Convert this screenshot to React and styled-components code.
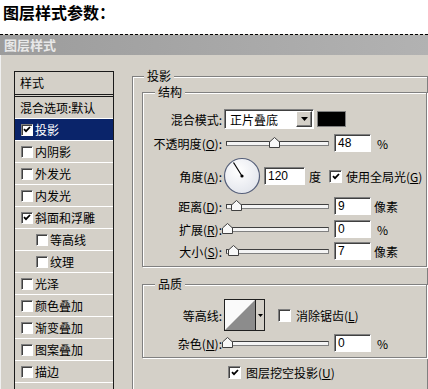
import React from 'react';
import styled, { createGlobalStyle } from 'styled-components';

const FONT = `"Noto Sans CJK SC", "Noto Sans", sans-serif`;

const GlobalStyle = createGlobalStyle`
  html, body { margin: 0; padding: 0; background: #ffffff; }
  body { font-family: ${FONT}; font-size: 12px; color: #000; }
`;

const Page = styled.div`
  width: 428px;
  height: 389px;
  overflow: hidden;
  display: flex;
  flex-direction: column;
`;

const Heading = styled.h1`
  margin: 0;
  height: 34px;
  box-sizing: border-box;
  padding: 3px 0 0 3px;
  font-size: 16px;
  line-height: 18px;
  font-weight: bold;
`;

const Window = styled.div`
  flex: 1;
  min-height: 0;
  border-top: 1px dashed #000;
  background: #d4d0c8;
  display: flex;
  flex-direction: column;
  overflow: hidden;
  box-shadow: inset 1px 0 0 #f0f0f0;
`;

const TitleBar = styled.div`
  height: 20px;
  flex-shrink: 0;
  background: linear-gradient(to right, #9c9c9c, #b2b2b2);
  color: #e8e8e8;
  font-weight: bold;
  font-size: 13px;
  line-height: 20px;
  padding-left: 4px;
`;

const Body = styled.div`
  display: flex;
  align-items: flex-start;
  gap: 18px;
  padding: 14px 0 0 14px;
`;

/* ---------- left style list ---------- */

const StyleList = styled.div`
  width: 100px;
  height: 340px;
  flex-shrink: 0;
  box-sizing: border-box;
  margin-top: 2px;
  border: 1px solid #1a1a1a;
  border-bottom: none;
`;

const ListHeader = styled.div`
  height: 22px;
  line-height: 22px;
  padding-left: 5px;
  border-bottom: 3px double #1a1a1a;
`;

const ListItem = styled.div`
  height: 21px;
  border-bottom: 1px solid #ffffff;
  display: flex;
  align-items: center;
  gap: 2px;
  padding-left: ${p => p.$pad}px;
  background: ${p => (p.$selected ? '#0a246a' : 'transparent')};
  color: ${p => (p.$selected ? '#ffffff' : '#000000')};
  white-space: nowrap;
`;

/* ---------- shared win-classic bits ---------- */

const Box = styled.span`
  width: ${p => p.$size}px;
  height: ${p => p.$size}px;
  flex-shrink: 0;
  box-sizing: border-box;
  background: #ffffff;
  border: 1px solid;
  border-color: #808080 #ffffff #ffffff #808080;
  box-shadow: inset 1px 1px 0 #404040;
  display: flex;
  align-items: center;
  justify-content: center;
  margin-left: ${p => p.$ml || 0}px;
`;

const CheckBox = ({ checked, size = 13, ml }) => (
  <Box $size={size} $ml={ml}>
    {checked && (
      <svg width="8" height="7" viewBox="0 0 8 7">
        <path d="M1 3.2 L3 5.2 L7 1" fill="none" stroke="#000" strokeWidth="1.8" />
      </svg>
    )}
  </Box>
);

const Group = styled.fieldset`
  margin: ${p => p.$margin || 0};
  min-width: 0;
  box-sizing: border-box;
  width: ${p => p.$w || 'auto'};
  height: ${p => (p.$h ? p.$h + 'px' : 'auto')};
  padding: ${p => p.$pad};
  border: 1px solid #808080;
  box-shadow: inset 1px 1px 0 #ffffff, 1px 1px 0 #ffffff;
`;

const Legend = styled.legend`
  margin-left: ${p => p.$ml}px;
  padding: 0 3px;
  font-size: 12px;
  line-height: 14px;
  background: #d4d0c8;
`;

const Field = styled.div`
  display: flex;
  align-items: center;
  height: ${p => p.$h}px;
  white-space: nowrap;
`;

const Label = styled.span`
  width: 79px;
  flex-shrink: 0;
  text-align: right;
  padding-right: 0;
`;

const Select = styled.div`
  width: 90px;
  height: 20px;
  margin-left: 2px;
  box-sizing: border-box;
  background: #fff;
  border: 1px solid;
  border-color: #808080 #ffffff #ffffff #808080;
  box-shadow: inset 1px 1px 0 #404040;
  display: flex;
  align-items: center;
  justify-content: space-between;
  padding: 0 1px 0 5px;
`;

const DropButton = styled.span`
  width: 16px;
  height: 16px;
  box-sizing: border-box;
  background: #d4d0c8;
  border: 1px solid;
  border-color: #ffffff #404040 #404040 #ffffff;
  box-shadow: inset -1px -1px 0 #808080;
  display: flex;
  align-items: center;
  justify-content: center;
`;

const Arrow = () => (
  <svg width="7" height="4" viewBox="0 0 7 4">
    <path d="M0 0 H7 L3.5 4 Z" fill="#000" />
  </svg>
);

const Swatch = styled.span`
  width: 29px;
  height: 16px;
  margin-left: 3px;
  background: #000;
  box-sizing: border-box;
  border: 1px solid #808080;
`;

const Track = styled.div`
  position: relative;
  width: 103px;
  height: 5px;
  margin-left: 4px;
  box-sizing: border-box;
  background: #f4f4f4;
  border: 1px solid;
  border-color: #404040 #808080 #808080 #404040;
`;

const Thumb = styled.svg`
  position: absolute;
  top: -5px;
`;

const Slider = ({ at }) => (
  <Track>
    <Thumb width="11" height="11" viewBox="0 0 11 11" style={{ left: at - 6 }}>
      <path d="M5.5 0.5 L10.5 5 V10.5 H0.5 V5 Z" fill="#f8f8f8" stroke="#404040" />
    </Thumb>
  </Track>
);

const NumBox = styled.div`
  width: ${p => p.$w}px;
  height: 18px;
  margin-left: ${p => p.$ml}px;
  box-sizing: border-box;
  background: #fff;
  border: 1px solid;
  border-color: #808080 #ffffff #ffffff #808080;
  box-shadow: inset 1px 1px 0 #404040;
  padding-left: 3px;
  line-height: 16px;
  font-family: "Liberation Sans", Arial, sans-serif;
  font-size: 12px;
`;

const Unit = styled.span`
  margin-left: ${p => p.$ml}px;
`;

const Dial = styled.svg`
  margin-left: 1px;
  flex-shrink: 0;
`;

const Contour = styled.div`
  width: 41px;
  height: 32px;
  margin-left: 2px;
  box-sizing: border-box;
  border: 1px solid #202020;
  display: flex;
  background: #d4d0c8;
`;

const ContourStrip = styled.span`
  flex: 1;
  border-left: 1px solid #202020;
  display: flex;
  align-items: center;
  justify-content: center;
`;

const Opt = styled.span`
  margin-left: ${p => p.$ml}px;
`;

const BottomRow = styled.div`
  display: flex;
  align-items: center;
  height: 20px;
  margin: 4px 0 0 86px;
  white-space: nowrap;
`;

const items = [
  { t: '投影', c: true, sel: true },
  { t: '内阴影' },
  { t: '外发光' },
  { t: '内发光' },
  { t: '斜面和浮雕', c: true },
  { t: '等高线', ind: true },
  { t: '纹理', ind: true },
  { t: '光泽' },
  { t: '颜色叠加' },
  { t: '渐变叠加' },
  { t: '图案叠加' },
  { t: '描边' },
];

const SliderField = ({ label, k, at, value, unit, h }) => (
  <Field $h={h}>
    <Label>
      {label}(<u>{k}</u>):
    </Label>
    <Slider at={at} />
    <NumBox $w={37} $ml={5}>{value}</NumBox>
    <Unit $ml={unit === '%' ? 6 : 3}>{unit}</Unit>
  </Field>
);

export default function App() {
  return (
    <Page>
      <GlobalStyle />
      <Heading>图层样式参数：</Heading>
      <Window>
        <TitleBar>图层样式</TitleBar>
        <Body>
          <StyleList>
            <ListHeader>样式</ListHeader>
            <ListItem $pad={5}>混合选项:默认</ListItem>
            {items.map(it => (
              <ListItem key={it.t} $pad={it.ind ? 21 : 6} $selected={it.sel}>
                <CheckBox checked={it.c} size={12} />
                <span>{it.t}</span>
              </ListItem>
            ))}
            <ListItem $pad={6} />
          </StyleList>

          <Group $w="320px" $h={340} $pad="2px 0 0 9px">
            <Legend $ml={2}>投影</Legend>

            <Group $pad="9px 0 6px 0">
              <Legend $ml={12}>结构</Legend>
              <Field $h={22}>
                <Label>混合模式:</Label>
                <Select>
                  <span>正片叠底</span>
                  <DropButton>
                    <Arrow />
                  </DropButton>
                </Select>
                <Swatch />
              </Field>
              <SliderField label="不透明度" k="O" at={48} value="48" unit="%" h={26} />
              <Field $h={40}>
                <Label>
                  角度(<u>A</u>):
                </Label>
                <Dial width="38" height="38" viewBox="0 0 38 38">
                  <defs>
                    <radialGradient id="dialFill" cx="40%" cy="35%" r="70%">
                      <stop offset="0" stopColor="#ffffff" />
                      <stop offset="1" stopColor="#e2e5ec" />
                    </radialGradient>
                  </defs>
                  <circle cx="19" cy="19" r="17.5" fill="url(#dialFill)" stroke="#56607a" strokeWidth="1.2" />
                  <line x1="19" y1="19" x2="10.5" y2="5.5" stroke="#000" strokeWidth="1.2" />
                  <circle cx="19" cy="19" r="1.6" fill="#000" />
                </Dial>
                <NumBox $w={41} $ml={3}>120</NumBox>
                <Unit $ml={4}>度</Unit>
                <CheckBox checked ml={8} />
                <Opt $ml={4}>
                  使用全局光(<u>G</u>)
                </Opt>
              </Field>
              <SliderField label="距离" k="D" at={10} value="9" unit="像素" h={20} />
              <SliderField label="扩展" k="R" at={1} value="0" unit="%" h={26} />
              <SliderField label="大小" k="S" at={7} value="7" unit="像素" h={18} />
            </Group>

            <Group $margin="10px 0 0 0" $pad="7px 0 3px 0">
              <Legend $ml={12}>品质</Legend>
              <Field $h={34}>
                <Label>等高线:</Label>
                <Contour>
                  <svg width="30" height="30" viewBox="0 0 30 30">
                    <rect width="30" height="30" fill="#fafafa" />
                    <path d="M0 30 L30 0 V30 Z" fill="#8c8c8c" />
                  </svg>
                  <ContourStrip>
                    <svg width="5" height="3" viewBox="0 0 5 3">
                      <path d="M0 0 H5 L2.5 3 Z" fill="#000" />
                    </svg>
                  </ContourStrip>
                </Contour>
                <CheckBox ml={13} />
                <Opt $ml={5}>
                  消除锯齿(<u>L</u>)
                </Opt>
              </Field>
              <SliderField label="杂色" k="N" at={1} value="0" unit="%" h={22} />
            </Group>

            <BottomRow>
              <CheckBox checked />
              <Opt $ml={5}>
                图层挖空投影(<u>U</u>)
              </Opt>
            </BottomRow>
          </Group>
        </Body>
      </Window>
    </Page>
  );
}
